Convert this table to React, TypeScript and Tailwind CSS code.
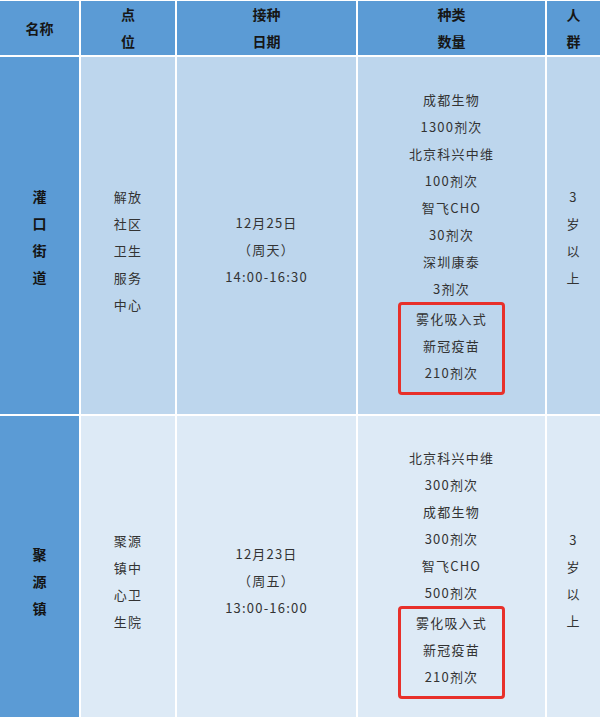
const font = { fontFamily: '"Noto Sans CJK SC", "Noto Sans", sans-serif' };

type Cell = {
  lines: string[];
  boxed?: string[];
  pt: string;
};

type Row = {
  name: string[];
  namePt: string;
  bg: string;
  height: string;
  cells: Cell[];
};

const rows: Row[] = [
  {
    name: ["灌", "口", "街", "道"],
    namePt: "pt-[126px]",
    bg: "bg-[#bdd6ed]",
    height: "h-[357px]",
    cells: [
      { lines: ["解放", "社区", "卫生", "服务", "中心"], pt: "pt-[126px]" },
      { lines: ["12月25日", "（周天）", "14:00-16:30"], pt: "pt-[152px]" },
      {
        lines: ["成都生物", "1300剂次", "北京科兴中维", "100剂次", "智飞CHO", "30剂次", "深圳康泰", "3剂次"],
        boxed: ["雾化吸入式", "新冠疫苗", "210剂次"],
        pt: "pt-[29px]",
      },
      { lines: ["3", "岁", "以", "上"], pt: "pt-[126px]" },
    ],
  },
  {
    name: ["聚", "源", "镇"],
    namePt: "pt-[125px]",
    bg: "bg-[#ddeaf6]",
    height: "h-[301px]",
    cells: [
      { lines: ["聚源", "镇中", "心卫", "生院"], pt: "pt-[111px]" },
      { lines: ["12月23日", "（周五）", "13:00-16:00"], pt: "pt-[124px]" },
      {
        lines: ["北京科兴中维", "300剂次", "成都生物", "300剂次", "智飞CHO", "500剂次"],
        boxed: ["雾化吸入式", "新冠疫苗", "210剂次"],
        pt: "pt-[28px]",
      },
      { lines: ["3", "岁", "以", "上"], pt: "pt-[110px]" },
    ],
  },
];

const headers = [["名称"], ["点", "位"], ["接种", "日期"], ["种类", "数量"], ["人", "群"]];

export default function App() {
  return (
    <div className="w-[600px] h-[719px] bg-white pt-[1px]" style={font}>
      <div className="grid grid-cols-[79px_94px_179px_187px_1fr] gap-[2px] bg-white">
        {/* Header */}
        {headers.map((h, i) => (
          <div
            key={i}
            className="h-[54px] bg-[#5b9bd5] flex flex-col items-center justify-center text-[14px] leading-[27px] font-bold text-[#161616]"
          >
            {h.map((t) => (
              <span key={t}>{t}</span>
            ))}
          </div>
        ))}

        {rows.map((row, r) => (
          <div key={r} className="contents">
            <div
              className={`${row.height} ${row.namePt} bg-[#5b9bd5] flex flex-col items-center text-[14px] leading-[27px] font-bold text-[#141414]`}
            >
              {row.name.map((t) => (
                <span key={t}>{t}</span>
              ))}
            </div>
            {row.cells.map((cell, c) => (
              <div
                key={c}
                className={`${row.height} ${cell.pt} ${row.bg} flex flex-col items-center text-[13px] leading-[27px] tracking-[1.2px] text-[#333]`}
              >
                {cell.lines.map((t, i) => (
                  <span key={i}>{t}</span>
                ))}
                {cell.boxed && (
                  <div className="flex flex-col items-center w-[107px] border-[3px] border-[#e8302a] rounded-[4px] pb-[6px]">
                    {cell.boxed.map((t) => (
                      <span key={t}>{t}</span>
                    ))}
                  </div>
                )}
              </div>
            ))}
          </div>
        ))}
      </div>
    </div>
  );
}
